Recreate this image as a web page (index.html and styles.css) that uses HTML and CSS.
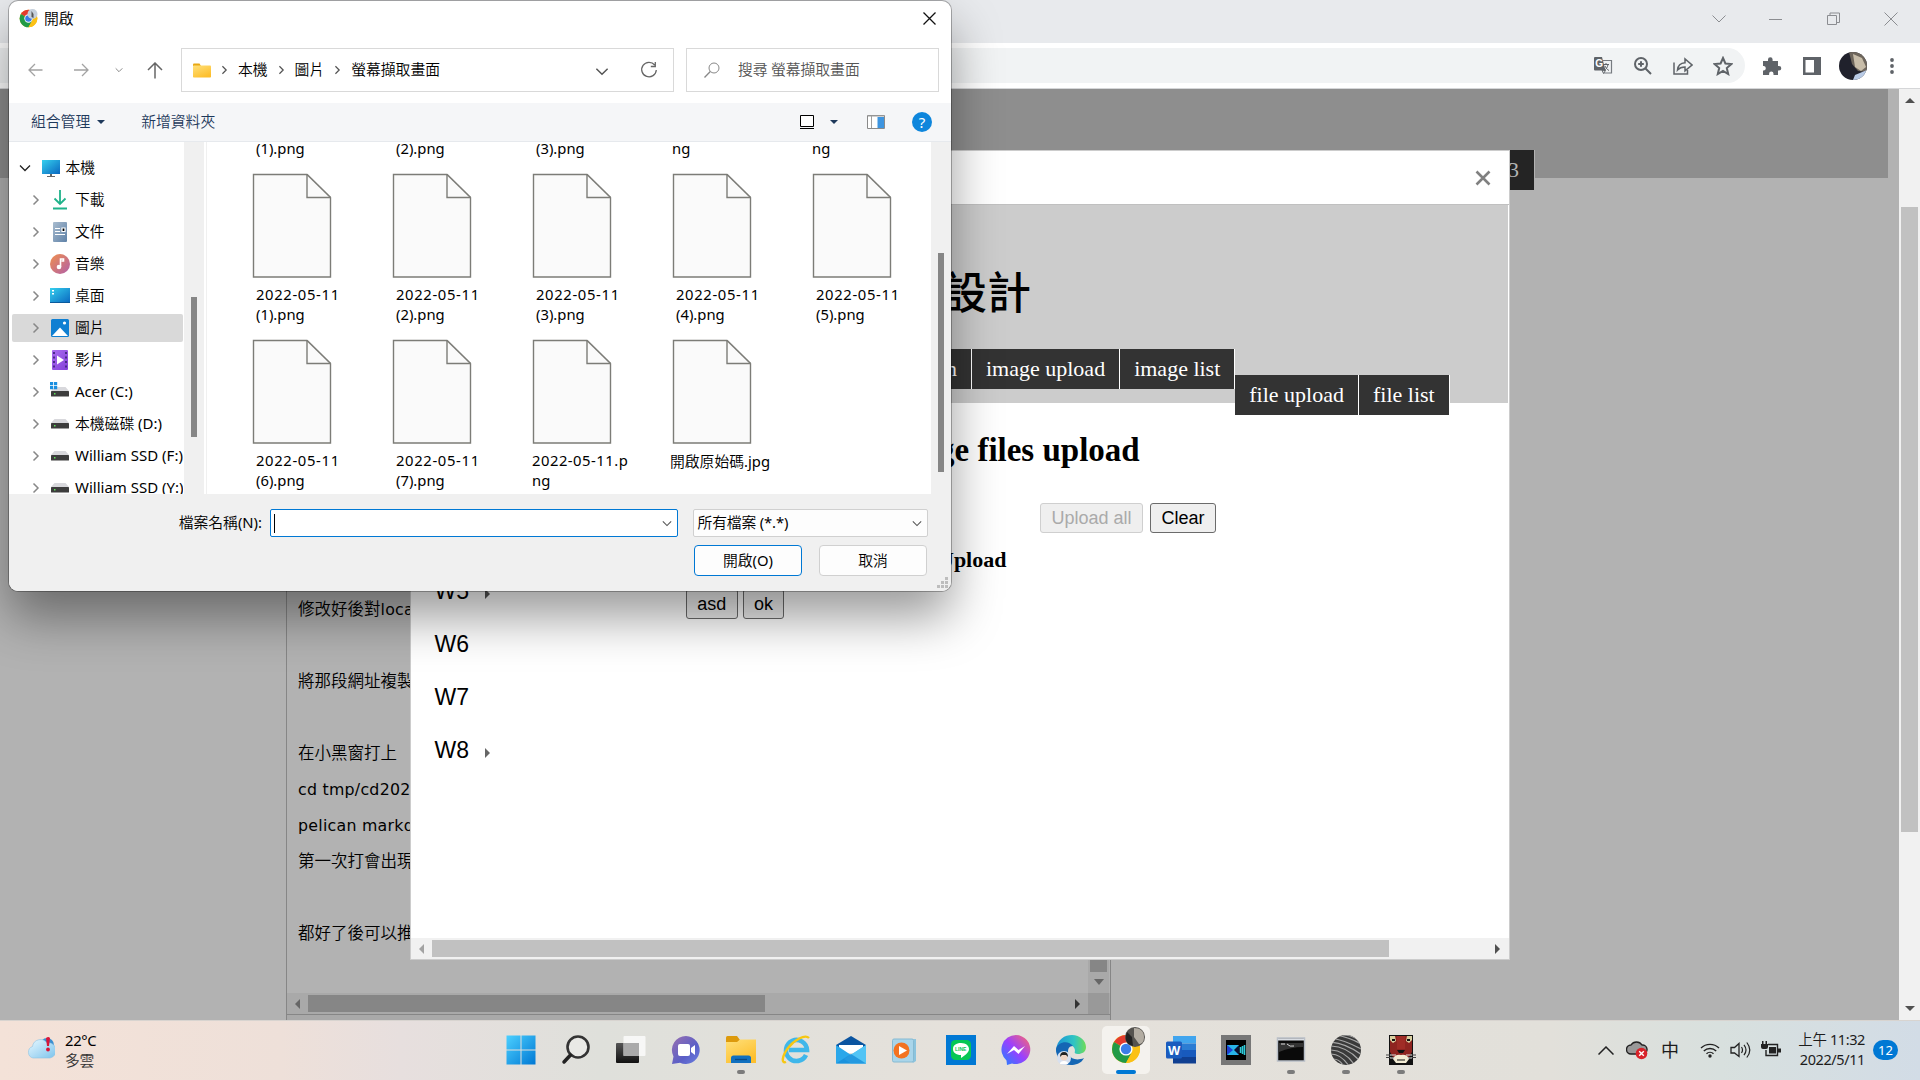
FILE: index.html
```html
<!DOCTYPE html>
<html lang="zh-Hant">
<head>
<meta charset="utf-8">
<title>開啟</title>
<link rel="stylesheet" href="styles.css">
</head>
<body>
<svg class="defs" width="0" height="0">
  <defs>
    <linearGradient id="gb" x1="0" y1="0" x2="1" y2="1"><stop offset="0" stop-color="#35d0ee"/><stop offset="1" stop-color="#0a67c0"/></linearGradient>
    <linearGradient id="gw" x1="0" y1="0" x2="1" y2="1"><stop offset="0" stop-color="#4cd0ff"/><stop offset="1" stop-color="#0078d4"/></linearGradient>
    <linearGradient id="gf" x1="0" y1="0" x2="0.6" y2="1"><stop offset="0" stop-color="#ffe07a"/><stop offset="1" stop-color="#fdbf2d"/></linearGradient>
    <linearGradient id="gm" x1="0" y1="0" x2="1" y2="1"><stop offset="0" stop-color="#f0904e"/><stop offset="1" stop-color="#b15fa8"/></linearGradient>
    <linearGradient id="gv" x1="0" y1="0" x2="1" y2="1"><stop offset="0" stop-color="#a96af0"/><stop offset="1" stop-color="#8442d8"/></linearGradient>
    <linearGradient id="gc" x1="0" y1="0" x2="1" y2="1"><stop offset="0" stop-color="#9a70b0"/><stop offset=".6" stop-color="#5b5fc7"/><stop offset="1" stop-color="#6a80e0"/></linearGradient>
    <linearGradient id="gd" x1="0" y1="0" x2="1" y2="1"><stop offset="0" stop-color="#a9bccf"/><stop offset="1" stop-color="#5f82a8"/></linearGradient>
    <linearGradient id="gcl" x1="0" y1="0" x2="1" y2="1"><stop offset="0" stop-color="#e8f8ff"/><stop offset="1" stop-color="#7cc3ec"/></linearGradient>
    <linearGradient id="gms" x1="0" y1="1" x2="1" y2="0"><stop offset="0" stop-color="#1a86ff"/><stop offset=".5" stop-color="#9a40ff"/><stop offset="1" stop-color="#ff6a68"/></linearGradient>
    <linearGradient id="ge" x1="0" y1="0" x2="1" y2="0"><stop offset="0" stop-color="#1a93d6"/><stop offset=".6" stop-color="#2fc4c4"/><stop offset="1" stop-color="#6fdc57"/></linearGradient>
    <linearGradient id="gt" x1="0" y1="0" x2="0" y2="1"><stop offset="0" stop-color="#555"/><stop offset="1" stop-color="#111"/></linearGradient>
    <symbol id="page" viewBox="0 0 80 106"><path d="M1.5 1.500H55L78.500 24.500V104H1.500z" fill="#fafafa" stroke="#7c7c77" stroke-width="1.400"/><path d="M55 1.500V24.500H78.500" fill="#fafafa" stroke="#7c7c77" stroke-width="1.400"/><path d="M55 1.500L78.500 24.500" stroke="#7c7c77" stroke-width="1.400"/></symbol>
    <symbol id="chr" viewBox="0 0 8 12"><path d="M1.500 1.500l4.500 4.500-4.500 4.500" fill="none" stroke="currentColor" stroke-width="1.500"/></symbol>
    <symbol id="chd" viewBox="0 0 12 8"><path d="M1 1.500l5 5 5-5" fill="none" stroke="currentColor" stroke-width="1.300"/></symbol>
    <symbol id="drive" viewBox="0 0 20 20"><path d="M4.500 5h11l3.500 4H1z" fill="#d8d8dc"/><rect x="1" y="9" width="18" height="5.500" rx=".6" fill="#3d3d3d"/><rect x="4" y="11" width="1.500" height="1.500" fill="#5fe05a"/></symbol>
    <symbol id="chrome" viewBox="0 0 30 30"><circle cx="15" cy="15" r="14" fill="#fbc116"/><path d="M15 15L2.900 8A14 14 0 0 1 27.100 8z" fill="#e33b2e"/><path d="M2.900 8A14 14 0 0 0 15 29l6-10.500L15 15z" fill="#219a47"/><path d="M15 8.500h12.400a14 14 0 0 1-12.400 20.500l5.600-10.500z" fill="#fbc116"/><circle cx="15" cy="15" r="6.600" fill="#fff"/><circle cx="15" cy="15" r="5.200" fill="#3a7de8"/></symbol>
  </defs>
</svg>

<div class="desktop">
  <section class="browser">
    <div class="tabstrip">
      <svg width="14" height="8"><path d="M.5 .5l6.500 6.500L13.500 .5" class="thin"/></svg>
      <svg width="14" height="14"><path d="M0 7.500h13" class="thin"/></svg>
      <svg width="14" height="14"><path d="M.5 3.500h9v9h-9zM3 3V1h9.500v9.500h-2.500" class="thin"/></svg>
      <svg width="14" height="14"><path d="M.5 .5l13 13M13.500 .5L.5 13.500" class="thin"/></svg>
    </div>
    <div class="toolbar">
      <div class="omnibox">
        <svg width="20" height="20" viewBox="0 0 20 20"><path d="M9 4.500h9.500v12.500H11" fill="#f1f3f4" stroke="#777b80" stroke-width="1.200"/><path d="M2 1h7l3.500 13.500H2a1 1 0 0 1-1-1V2a1 1 0 0 1 1-1z" fill="#5f6368"/><text x="2.300" y="11" class="gl">G</text><path d="M10 8.500h6M13 7v1.500M15 8.500c-.5 3-2 5-4 6M12 10c1 2 2 3.500 4 4.500M9 14l1.500 3.500 2-3z" fill="none" stroke="#5f6368"/></svg>
        <svg width="20" height="20" viewBox="0 0 20 20"><circle cx="8" cy="8" r="6" class="ic"/><path d="M12.500 12.500l5.500 5.500M5.200 8h5.600M8 5.200v5.600" class="ic"/></svg>
        <svg width="20" height="20" viewBox="0 0 20 20"><path d="M1 6.500V18h13.500v-4" fill="none" stroke="#5f6368" stroke-width="1.500"/><path d="M4.500 14c.5-5 3.500-7 7.500-7.200V3l7 6-7 5.800V11c-3.500 0-5.500.8-7.500 3z" fill="none" stroke="#5f6368" stroke-width="1.500"/></svg>
        <svg width="20" height="20" viewBox="0 0 20 20"><path d="M10 2l2.400 5.500 6 .5-4.600 4 1.400 6-5.200-3.200L4.800 18l1.400-6-4.600-4 6-.5z" class="ic"/></svg>
      </div>
      <div class="tools">
        <svg width="20" height="20" viewBox="0 0 20 20"><path d="M1 5h5V3.500a2.300 2.300 0 0 1 4.600 0V5h5.400v5h1a2.300 2.300 0 0 1 0 4.600h-1V19h-4.500v-1.200a2.200 2.200 0 0 0-4.400 0V19H1v-4.500h1a2.300 2.300 0 0 0 0-4.500H1z" fill="#5f6368"/></svg>
        <svg width="20" height="20" viewBox="0 0 20 20"><path d="M1 1h18v18H1zM3.500 4v12.500h8.500V4z" fill="#5f6368" fill-rule="evenodd"/></svg>
        <svg width="28" height="28" viewBox="0 0 28 28"><clipPath id="av"><circle cx="14" cy="14" r="14"/></clipPath><g clip-path="url(#av)"><path d="M0 0h28v28H0z" fill="#20212c"/><path d="M10 0h18v20l-9-1-6-7z" fill="#6e665c"/><path d="M14 2l9 4 4 9-5 4-6-4z" fill="#c8bda9"/><path d="M16 23l12-5v10H14z" fill="#b9cbe6"/></g></svg>
        <svg width="6" height="18" viewBox="0 0 6 18"><circle cx="3" cy="3" r="1.900" fill="#5f6368"/><circle cx="3" cy="9" r="1.900" fill="#5f6368"/><circle cx="3" cy="15" r="1.900" fill="#5f6368"/></svg>
      </div>
    </div>
    <div class="viewport">
      <div class="page">
        <div class="banner"></div>
        <div class="counter">3</div>
        <div class="article">
          <div class="article-row">
            <div class="text">
              <p>修改好後對<span>localhost</span></p><p></p><p>將那段網址複製起來</p><p></p><p>在小黑窗打上</p>
              <p><span>cd tmp/cd2022</span></p><p><span>pelican markdown</span></p><p>第一次打會出現</p><p></p><p>都好了後可以推</p>
            </div>
            <div class="vbar"><i></i><svg width="10" height="6"><path d="M0 0h10L5 6z" fill="#666"/></svg></div>
          </div>
          <div class="hbar"><svg width="5" height="10"><path d="M5 0v10L0 5z" fill="#666"/></svg><i></i><svg width="5" height="10"><path d="M0 0v10l5-5z" fill="#333"/></svg><b></b></div>
          <div class="status"></div>
        </div>
      </div>
      <div class="scroll">
        <svg width="10" height="5"><path d="M0 5h10L5 0z" fill="#505050"/></svg><i></i><svg width="10" height="5"><path d="M0 0h10L5 5z" fill="#505050"/></svg>
      </div>
    </div>
  </section>

  <section class="modal">
    <header><svg width="16" height="16"><path d="M1.500 1.500l13 13M14.500 1.500l-13 13" stroke="#808080" stroke-width="2.600"/></svg></header>
    <div class="hero">
      <h1>設計</h1>
      <nav><a>n</a><a>image upload</a><a>image list</a><span><a>file upload</a><a>file list</a></span></nav>
    </div>
    <div class="columns">
      <ul>
        <li>W5<svg width="5" height="10"><path d="M0 0v10l5-5z" fill="#555"/></svg></li><li>W6</li><li>W7</li>
        <li>W8<svg width="5" height="10"><path d="M0 0v10l5-5z" fill="#666"/></svg></li>
      </ul>
      <div class="form">
        <h2>ge files upload</h2>
        <div class="actions"><button disabled>Upload all</button><button>Clear</button></div>
        <h3>Upload</h3>
        <div class="pair"><button>asd</button><button>ok</button></div>
      </div>
    </div>
    <footer><svg width="5" height="10"><path d="M5 0v10L0 5z" fill="#a3a3a3"/></svg><i></i><svg width="5" height="10"><path d="M0 0v10l5-5z" fill="#505050"/></svg></footer>
  </section>

  <section class="dialog">
    <div class="titlebar">
      <svg width="19" height="19"><use href="#chrome"/><circle cx="13.500" cy="5" r="5" fill="#c5cfdb"/><path d="M12.500 2l2 3v4l-2-1z" fill="#555"/></svg>
      <span class="cjk">開啟</span>
      <svg class="x" width="13" height="13"><path d="M.5 .5l12 12M12.500 .5l-12 12" stroke="#111" stroke-width="1.300"/></svg>
    </div>
    <div class="nav">
      <div class="arrows">
        <svg width="15" height="14"><path d="M14.500 7H1M7 1L1 7l6 6" fill="none" stroke="#a3a3a3" stroke-width="1.300"/></svg>
        <svg width="15" height="14"><path d="M0 7h13.500M8 1l6 6-6 6" fill="none" stroke="#a3a3a3" stroke-width="1.300"/></svg>
        <svg width="8" height="6" class="g9"><use href="#chd"/></svg>
        <svg width="16" height="17"><path d="M8 16.500V1M1 8l7-7 7 7" fill="none" stroke="#666" stroke-width="1.500"/></svg>
      </div>
      <div class="path cjk">
        <svg width="18" height="15"><path d="M0 1.500Q0 .5 1 .5h5.500L8 3H0z" fill="#e8a712"/><rect y="2.500" width="18" height="12" rx=".8" fill="url(#gf)"/></svg>
        <svg width="7" height="10"><use href="#chr"/></svg><span>本機</span>
        <svg width="7" height="10"><use href="#chr"/></svg><span>圖片</span>
        <svg width="7" height="10"><use href="#chr"/></svg><span>螢幕擷取畫面</span>
        <svg class="drop" width="14" height="9"><use href="#chd"/></svg>
        <svg width="18" height="18"><path d="M14.700 4A7.300 7.300 0 1 0 16.300 9M15.300 1v4.500h-4.500" fill="none" stroke="#666" stroke-width="1.300"/></svg>
      </div>
      <div class="search cjk"><svg width="16" height="16"><circle cx="10" cy="6" r="5" fill="none" stroke="#888"/><path d="M6.300 9.500L.5 15.500" stroke="#888" stroke-width="1.300"/></svg><span>搜尋 螢幕擷取畫面</span></div>
    </div>
    <div class="commands cjk">
      <span>組合管理</span><svg width="8" height="4"><path d="M0 0h8L4 4z" fill="#1e395b"/></svg><span class="new">新增資料夾</span>
      <svg class="view" width="16" height="16"><path d="M1.500 1.500h13v11h-13z" fill="#fff" stroke="#000"/><path d="M1 14.500h14" stroke="#000"/></svg>
      <svg class="tri" width="8" height="4"><path d="M0 0h8L4 4z" fill="#1e395b"/></svg>
      <svg class="pane" width="18" height="14"><path d="M.5 .5h17v13H.5z" fill="#fff" stroke="#8a8a8a"/><path d="M1 1h16M4.500 1v12" stroke="#a0a0a0"/><path d="M10.500 2h6.500v11h-6.500z" fill="#3e95e0"/></svg>
      <div class="help">?</div>
    </div>
    <div class="content">
      <div class="tree">
        <div class="row root"><svg width="12" height="8"><use href="#chd"/></svg><svg width="20" height="20"><path d="M1 2h18v14H1z" fill="url(#gb)"/><path d="M9 16h2v2h3v1H6v-1h3z" fill="#666"/></svg><span class="cjk">本機</span></div>
        <div class="row"><svg width="8" height="12"><use href="#chr"/></svg><svg width="20" height="20"><path d="M10 0v14M4.500 8.500L10 14l5.500-5.500M3 18.500h14" fill="none" stroke="#1fb28a" stroke-width="1.800"/></svg><span class="cjk">下載</span></div>
        <div class="row"><svg width="8" height="12"><use href="#chr"/></svg><svg width="20" height="20"><rect x="3" width="14" height="20" rx="1" fill="url(#gd)"/><path d="M5 6.500h5M5 9.500h5M5 12.500h10M12 6h3v3.500h-3z" stroke="#fff" stroke-width="1.200"/></svg><span class="cjk">文件</span></div>
        <div class="row"><svg width="8" height="12"><use href="#chr"/></svg><svg width="20" height="20"><circle cx="10" cy="10" r="10" fill="url(#gm)"/><path d="M10.500 13V5h3v2h-2" fill="none" stroke="#fff" stroke-width="1.600"/><circle cx="9" cy="13" r="2.300" fill="#fff"/></svg><span class="cjk">音樂</span></div>
        <div class="row"><svg width="8" height="12"><use href="#chr"/></svg><svg width="20" height="20"><path d="M0 2h20v15H0z" fill="url(#gb)"/><path d="M2 4h2v1.500H2zM2 7h2v1.500H2z" fill="#fff"/><path d="M0 16h20v1H0z" fill="#0a5a9c"/></svg><span class="cjk">桌面</span></div>
        <div class="row sel"><svg width="8" height="12"><use href="#chr"/></svg><svg width="20" height="20"><rect x="1" y="1" width="18" height="18" rx="1.500" fill="#0f7fd2"/><path d="M2 18l8-8.500 8 8.500z" fill="#fff"/><circle cx="14.500" cy="5" r="1.600" fill="#fff"/></svg><span class="cjk">圖片</span></div>
        <div class="row"><svg width="8" height="12"><use href="#chr"/></svg><svg width="20" height="20"><rect x="2" width="16" height="20" rx="1" fill="url(#gv)"/><path d="M4 2v17M16 2v17" stroke="#4b2a8a" stroke-width="2" stroke-dasharray="2 2.500"/><path d="M7 5.500l7 4.500-7 4.500z" fill="#fff"/></svg><span class="cjk">影片</span></div>
        <div class="row"><svg width="8" height="12"><use href="#chr"/></svg><svg width="20" height="20"><use href="#drive"/><path d="M0 0h3.200v3.200H0zM4 0h3.200v3.200H4zM0 4h3.200v3.200H0zM4 4h3.200v3.200H4z" fill="#1a8fe0"/></svg><span>Acer (C:)</span></div>
        <div class="row"><svg width="8" height="12"><use href="#chr"/></svg><svg width="20" height="20"><use href="#drive"/></svg><span><u class="cjk">本機磁碟</u> (D:)</span></div>
        <div class="row"><svg width="8" height="12"><use href="#chr"/></svg><svg width="20" height="20"><use href="#drive"/></svg><span>William SSD (F:)</span></div>
        <div class="row"><svg width="8" height="12"><use href="#chr"/></svg><svg width="20" height="20"><use href="#drive"/></svg><span>William SSD (Y:)</span></div>
      </div>
      <div class="track left"><i></i></div>
      <div class="files">
        <div class="line"><span>(1).png</span><span>(2).png</span><span>(3).png</span><span class="w">ng</span><span class="w">ng</span></div>
        <div class="grid">
          <div><svg width="80" height="106"><use href="#page"/></svg><p><b>2022-05-11</b>(1).png</p></div>
          <div><svg width="80" height="106"><use href="#page"/></svg><p><b>2022-05-11</b>(2).png</p></div>
          <div><svg width="80" height="106"><use href="#page"/></svg><p><b>2022-05-11</b>(3).png</p></div>
          <div><svg width="80" height="106"><use href="#page"/></svg><p><b>2022-05-11</b>(4).png</p></div>
          <div><svg width="80" height="106"><use href="#page"/></svg><p><b>2022-05-11</b>(5).png</p></div>
          <div><svg width="80" height="106"><use href="#page"/></svg><p><b>2022-05-11</b>(6).png</p></div>
          <div><svg width="80" height="106"><use href="#page"/></svg><p><b>2022-05-11</b>(7).png</p></div>
          <div><svg width="80" height="106"><use href="#page"/></svg><p class="w"><b>2022-05-11.p</b>ng</p></div>
          <div><svg width="80" height="106"><use href="#page"/></svg><p class="z"><u class="cjk">開啟原始碼</u>.jpg</p></div>
        </div>
      </div>
      <div class="track right"><i></i></div>
    </div>
    <div class="bottom">
      <div class="fields">
        <label><u class="cjk">檔案名稱</u>(N):</label>
        <div class="input"><i></i><svg width="10" height="7"><use href="#chd"/></svg></div>
        <div class="select"><span><u class="cjk">所有檔案</u> (*.*)</span><svg width="10" height="7"><use href="#chd"/></svg></div>
      </div>
      <div class="buttons"><div class="btn primary"><u class="cjk">開啟</u>(O)</div><div class="btn cjk">取消</div></div>
      <svg class="grip" width="12" height="12"><path d="M8 0h3v3H8zM8 4h3v3H8zM4 4h3v3H4zM8 8h3v3H8zM4 8h3v3H4zM0 8h3v3H0z" fill="#bdbdbd"/></svg>
    </div>
  </section>

  <section class="taskbar">
    <div class="weather">
      <svg width="28" height="24" viewBox="0 0 28 24"><circle cx="20" cy="9" r="7" fill="#3b8fd0"/><path d="M6 22a6 6 0 0 1-.5-11.500A8 8 0 0 1 20 7a6 6 0 0 1 3 15z" fill="url(#gcl)" stroke="#8fc2e2" stroke-width=".6"/><path d="M19 2q2.500-2 4 0l-1 8h-2z" fill="#d9153a"/><circle cx="21" cy="13.500" r="1.900" fill="#d9153a"/></svg>
      <div>22°C<br><em class="cjk">多雲</em></div>
    </div>
    <div class="apps">
      <div><svg width="30" height="30"><path d="M.5 .5h14v14H.5zM15.500 .5h14v14h-14zM.5 15.500h14v14H.5zM15.500 15.500h14v14h-14z" fill="url(#gw)"/></svg></div>
      <div><svg width="30" height="30"><circle cx="17" cy="12" r="10.500" fill="#e9e9e6" stroke="#333" stroke-width="2.600"/><path d="M9.500 20L3 27" stroke="#222" stroke-width="3.500" stroke-linecap="round"/></svg></div>
      <div><svg width="30" height="30"><rect y="8" width="23" height="20" rx="1" fill="url(#gt)"/><rect x="7.500" y="1" width="22" height="20" rx="1" fill="#fff" opacity=".75"/><path d="M7.500 8H23v13H7.500z" fill="#aaa"/></svg></div>
      <div><svg width="30" height="30"><path d="M15 1a14 14 0 1 1-6 26.800L1 29l1.500-7.500A14 14 0 0 1 15 1z" fill="url(#gc)"/><rect x="7" y="9" width="12" height="12" rx="2" fill="#fff"/><path d="M20 13l4-3v10l-4-3z" fill="#fff"/></svg></div>
      <div class="run"><svg width="30" height="30"><path d="M0 2.500Q0 1 1.500 1H11l3 4-3 3H0z" fill="#dd9a0c"/><path d="M0 7h11l3-2.500h16V28H0z" fill="url(#gf)"/><path d="M5 28v-5q0-2.500 2.500-2.500h15q2.500 0 2.500 2.500v5z" fill="#1170bf"/><path d="M9 24.500h12" stroke="#0a4a86" stroke-width="1.300"/></svg></div>
      <div><svg width="30" height="30"><path d="M25 20A10.500 10.500 0 1 1 26 15H8" fill="none" stroke="#3fb7ea" stroke-width="4.600"/><path d="M28 3C24-1 13 5 7 13S0 29 5 27" fill="none" stroke="#f6c713" stroke-width="2.400"/></svg></div>
      <div><svg width="30" height="30"><path d="M0 10L15 1l15 9v6H0z" fill="#0a54a0"/><path d="M3 10h24v8H3z" fill="#fff"/><path d="M0 10l15 10L30 10v18.500H0z" fill="#2aa7ea"/><path d="M30 10L8 24l7 4.500h15z" fill="#52c4f5"/><path d="M0 28.500h30L15 19z" fill="#168bd8" opacity=".75"/></svg></div>
      <div><svg width="30" height="30"><path d="M5 5l20-1v22l-3 2z" fill="#8cc4de"/><rect x="1.500" y="4" width="21" height="23" rx="1.500" fill="#a9d5ea" stroke="#86bad2"/><circle cx="10.500" cy="15.500" r="8" fill="#f37321"/><path d="M8 11l8 4.500-8 4.500z" fill="#fff"/></svg></div>
      <div><svg width="30" height="30"><path d="M0 0h30v30H0z" fill="#0078d4"/><rect x="5" y="5" width="20" height="20" rx="4.500" fill="#06c755"/><path d="M15 8c5 0 8 2.800 8 6 0 4-5 7-8 9v-3c-5 0-8-2.500-8-6s3-6 8-6z" fill="#fff"/><text x="9" y="16.300" class="ln">LINE</text></svg></div>
      <div><svg width="30" height="30"><path d="M15 0a14.500 14.500 0 1 1-4 28.500L6 30l-.5-4.500A14.500 14.500 0 0 1 15 0z" fill="url(#gms)"/><path d="M6 19l7-8 4.500 4 6.500-4-6.500 8-4.500-4z" fill="#fff"/></svg></div>
      <div><svg width="30" height="30"><path d="M0 15C1 4 9 0 16 0c8 0 14 6 14 12 0 5-4 7-8 7-3 0-4-1-3-3 0-5-5-7-9-6S2 13 0 18z" fill="url(#ge)"/><path d="M0 14c2-8 13-9 17-3-5 0-6 5-4 9s8 6 15 3c-3 6-9 7-13 7C6 30 0 23 0 14z" fill="#1466b4"/><circle cx="8" cy="23" r="7" fill="#d7e0ef"/><circle cx="8" cy="22" r="3.500" fill="#f1d5c4"/><path d="M4 22q0-5 4-5t4 5l-2-2H6z" fill="#222"/><path d="M4 29q0-3 4-3t4 3z" fill="#fff"/></svg></div>
      <div class="run active"><svg width="38" height="38"><use href="#chrome" x="4" y="7" width="30" height="30"/><circle cx="28" cy="10" r="10" fill="#55534f"/><path d="M27 1c6 0 10 3 10 9s-3 7-5 7l-5-7z" fill="#b3ada3"/><path d="M20 5q-3 7 1 12l5 2-1-9z" fill="#222"/></svg></div>
      <div><svg width="30" height="30"><path d="M7 1h23v7.500H7z" fill="#41a5ee"/><path d="M7 8.500h23V15H7z" fill="#2b7cd3"/><path d="M7 15h23v7H7z" fill="#185abd"/><path d="M7 22h23v6.500H7z" fill="#103f91"/><rect y="6.500" width="16" height="17" rx="1.500" fill="#1b5cbe"/><text x="2" y="19.500" class="wd">W</text></svg></div>
      <div><svg width="30" height="30"><path d="M0 0h30v30H0z" fill="#777"/><path d="M5 5h20v20H5z" fill="#000"/><path d="M6 10h12v10H6z" fill="#28b4e8"/><path d="M6 10l6 5-6 5z" fill="#1c3fd0"/><path d="M18 10l-5 5 5 5z" fill="#0b1030"/><path d="M19.500 12v6M21.500 11v8M23.500 10v10" stroke="#2fc9d8" stroke-width="1.600"/></svg></div>
      <div class="run"><svg width="30" height="30"><rect x="1.500" y="3" width="27" height="23" fill="#0a0a0a" stroke="#b9bfc8" stroke-width="1.500"/><path d="M2 4.500h26" stroke="#d9dde3" stroke-width="2"/><path d="M3 8h24v4q-12 0-24 5z" fill="#333"/><path d="M5 9h4M11 9l3 2h4" stroke="#ddd"/></svg></div>
      <div class="run"><svg width="30" height="30"><clipPath id="bl"><circle cx="15" cy="15" r="15"/></clipPath><g clip-path="url(#bl)"><path d="M0 0h30v30H0z" fill="#3a3a3a"/><path d="M0 3q14 2 32 12M4 0q14 2 26 9M-1 7q16 1 32 13M-1 11q16 0 29 14M-1 15q14 0 24 14M0 19q10 0 18 12M2 24q6 0 10 6M12 0q8 0 14 4" fill="none" stroke="#a8a8a8" stroke-width="1.200"/></g></svg></div>
      <div class="run"><svg width="30" height="30"><path d="M3 0h24v30H3z" fill="#111"/><path d="M4 1h22v16l-3 5H7l-3-5z" fill="#8e2420"/><path d="M11 1h8v13h-8z" fill="#a02c26"/><path d="M4 1h5l1 5-3 2-3-3zM26 1h-5l-1 5 3 2 3-3z" fill="#d9cfa0"/><path d="M6 4h3v2H6zM21 4h3v2h-3z" fill="#111"/><path d="M11 15h8l-2 3h-4z" fill="#111"/><path d="M7 24q2-5 8-4 6-1 8 4l-3 4H10z" fill="#f3ecd4"/><path d="M11 25h8" stroke="#111"/><path d="M0 20h5M25 20h5M0 22.500h5M25 22.500h5" stroke="#444"/><path d="M4 20h6M20 20h6M4 23h5M21 23h5" stroke="#ddd"/></svg></div>
    </div>
    <div class="tray">
      <svg width="16" height="9"><path d="M.5 8.500L8 1l7.500 7.500" fill="none" stroke="#222" stroke-width="1.500"/></svg>
      <svg class="cloud" width="22" height="20"><path d="M5 14a4.500 4.500 0 0 1 0-9 6.500 6.500 0 0 1 11 0 4.500 4.500 0 0 1 1 9z" fill="#999" stroke="#222" stroke-width="1.400"/><circle cx="15.500" cy="13.500" r="5.800" fill="#d8232a"/><path d="M13.200 11.200l4.600 4.600M17.800 11.200l-4.600 4.600" stroke="#fff" stroke-width="1.400"/></svg>
      <span class="ime">中</span>
      <svg class="wifi" width="20" height="16"><path d="M1 6a13 13 0 0 1 18 0M3.800 9a9 9 0 0 1 12.400 0M6.500 11.800a5 5 0 0 1 7 0" fill="none" stroke="#222" stroke-width="1.400"/><circle cx="10" cy="14" r="1.700" fill="#222"/></svg>
      <svg class="vol" width="21" height="18"><path d="M1 6.500h3.500L9 2.500v13L4.500 12H1z" fill="none" stroke="#222" stroke-width="1.300"/><path d="M11.500 6q2 3 0 6M14 3.800q4 5.200 0 10.400M16.800 1.500q6 7.500 0 15" fill="none" stroke="#222" stroke-width="1.200"/></svg>
      <svg class="bat" width="21" height="18"><path d="M7 3.500h9.500v11H5V9" fill="none" stroke="#222" stroke-width="1.400"/><path d="M8 6h7v6.500H8zM17 7.500h3v4h-3zM0 3h7v3q0 2-2 2H2q-2 0-2-2zM1 0h1.500v3H1zM4.500 0H6v3H4.500z" fill="#222"/></svg>
      <div class="clock"><u class="cjk">上午</u> 11:32<br>2022/5/11</div>
      <div class="badge">12</div>
    </div>
  </section>
</div>
</body>
</html>
```
FILE: styles.css
```css
* { box-sizing: border-box; }
body, p, h1, h2, h3, ul { margin: 0; padding: 0; }
body { overflow: hidden; font: 14.8px "Noto Sans", "Noto Sans CJK TC", sans-serif; color: #000; }
svg { display: block; flex: none; }
u { text-decoration: none; }
.cjk { font-family: "Noto Sans CJK TC", sans-serif; font-weight: 350; }
.defs { position: absolute; }
.desktop { position: relative; width: 1920px; height: 1080px; overflow: hidden; }
.thin { fill: none; stroke: #8b8d91; }
.ic { fill: none; stroke: #5f6368; stroke-width: 2; }
.gl { font: bold 10px "Liberation Sans", sans-serif; fill: #fff; }
.ln { font: bold 5px "Liberation Sans", sans-serif; fill: #06c755; }
.wd { font: bold 13px "Liberation Sans", sans-serif; fill: #fff; }

/* browser */
.browser { height: 1020px; display: flex; flex-direction: column; }
.tabstrip { height: 43px; background: #e8eaed; display: flex; justify-content: flex-end; align-items: center; gap: 43.5px; padding: 0 22px 6px 0; }
.toolbar { height: 46px; background: #fff; border-bottom: 1px solid #d5d6d8; display: flex; align-items: center; padding-right: 25px; }
.omnibox { flex: 1; height: 35px; background: #f1f3f4; border-radius: 0 18px 18px 0; display: flex; justify-content: flex-end; align-items: center; gap: 20px; padding-right: 12.500px; }
.tools { width: 150px; display: flex; align-items: center; justify-content: flex-end; gap: 20px; }
.tools svg:nth-child(3) { margin-left: -3px; }
.tools svg:nth-child(4) { margin-left: 2px; }
.viewport { flex: 1; display: flex; }
.page { position: relative; flex: 1; background: #b2b2b2; }
.banner { width: 1888px; height: 89px; background: #8e8e8e; }
.counter { position: absolute; left: 1490px; top: 61px; width: 45px; height: 40px; background: #242424; border-right: 1px solid #b2b2b2; color: #b2b2b2; font: 22px/40px "Liberation Serif", serif; text-align: right; padding-right: 15px; }
.article { margin-left: 286px; width: 825px; height: 842px; border: 1px solid #868686; border-width: 0 1px; display: flex; flex-direction: column; }
.article-row { height: 815px; display: flex; padding-right: 1px; }
.text { flex: 1; padding: 412px 0 0 11px; font: 300 16.500px/36px "Noto Sans CJK TC", sans-serif; font-weight: 350; white-space: nowrap; }
.text p { height: 36px; overflow: hidden; }
.text span { font: 400 15.800px/34px "DejaVu Sans", sans-serif; letter-spacing: .25px; }
.vbar { width: 21px; background: #a9a9a9; display: flex; flex-direction: column; align-items: center; }
.vbar i { width: 17px; height: 794px; background: #868686; margin-bottom: 7px; }
.hbar { height: 21px; background: #a9a9a9; display: flex; align-items: center; padding: 0 1px 0 8px; }
.hbar i { width: 457px; height: 17px; background: #868686; margin: 0 310px 0 8px; }
.hbar b { margin-left: auto; width: 21px; height: 21px; background: #999; }
.status { height: 6px; background: #a9a9a9; border-top: 1px solid #868686; }
.scroll { width: 21px; background: #f1f1f1; display: flex; flex-direction: column; align-items: center; padding: 9px 0; }
.scroll i { width: 17px; height: 625px; background: #c1c1c1; margin: 104px 0 auto; }

/* modal window */
.modal { position: absolute; left: 410px; top: 150px; width: 1100px; height: 810px; background: #fff; border: 1px solid #ccc; display: flex; flex-direction: column; }
.modal header { height: 54px; border-bottom: 1px solid #c0c0c0; display: flex; justify-content: flex-end; align-items: center; padding-right: 18.500px; }
.hero { height: 198px; margin-right: 1px; background: #ccc; padding-top: 60px; }
.hero h1 { font: 500 44px/50px "Noto Sans CJK TC", sans-serif; margin: 0 0 34px 532px; }
.hero nav, .hero span { display: flex; }
.hero nav { padding-left: 521px; font: 22px/40px "Liberation Serif", serif; color: #fff; }
.hero a { height: 40px; background: #333; border-right: 1px solid #fff; padding: 0 14px; white-space: nowrap; }
.hero span { margin-top: 26px; }
.columns { flex: 1; display: flex; }
.columns ul { width: 275px; padding: 162px 0 0 23.500px; list-style: none; font: 23px/53px "Liberation Sans", sans-serif; }
.columns li { display: flex; align-items: center; height: 53px; gap: 16px; }
.columns li svg { margin-top: 5px; }
.form { font-family: "Liberation Serif", serif; }
.form h2 { font-size: 33px; line-height: 38px; margin: 28px 0 0 252px; }
.form h3 { font-size: 22px; line-height: 26px; margin: 14px 0 16px 252px; }
.actions, .pair { display: flex; gap: 7px; }
.pair { gap: 5px; }
.actions { margin: 34px 0 0 354px; }
button { height: 30px; padding: 0 10.500px; font: 18px "Liberation Sans", sans-serif; color: #000; background: #efefef; border: 1px solid #6b6b6b; border-radius: 3px; }
.pair button { padding: 0 10.300px; }
button:disabled { color: #aaa; border-color: #cfcfcf; }
.modal footer { height: 21px; background: #f1f1f1; display: flex; align-items: center; padding: 0 9px 0 8px; }
.modal footer i { width: 957px; height: 17px; background: #c1c1c1; margin: 0 auto 0 8px; }

/* file dialog */
.dialog { position: absolute; left: 9px; top: 1px; width: 942px; height: 590px; background: #fff; border-radius: 9px; overflow: hidden; box-shadow: 0 0 0 1px rgba(0,0,0,.28), 0 26px 50px rgba(0,0,0,.4); display: flex; flex-direction: column; }
.titlebar { height: 47px; display: flex; padding: 8px 15px 0 10px; gap: 6px; line-height: 18px; }
.titlebar .x { margin: 3px 0 0 auto; }
.nav { height: 44px; display: flex; }
.arrows { width: 172px; display: flex; align-items: center; padding-left: 18.500px; }
.arrows svg:nth-child(2) { margin-left: 31px; }
.arrows svg:nth-child(3) { margin: 0 24px 0 26px; }
.g9 { color: #777; }
.path { width: 493px; border: 1px solid #d9d9d9; display: flex; align-items: center; padding: 0 15px 0 11px; color: #555; white-space: nowrap; }
.path span { color: #000; margin: 0 10px 3px; }
.path > svg:nth-child(2) { margin-left: 10px; }
.path .drop { margin: 2px 31px 0 auto; }
.search { width: 253px; margin-left: 12px; border: 1px solid #d9d9d9; display: flex; align-items: center; padding-left: 17px; gap: 18px; color: #555; }
.search span { margin-bottom: 3px; }
.commands { height: 39px; margin-top: 11px; background: #f5f6f8; border-bottom: 1px solid #e6e9ed; display: flex; align-items: center; padding-left: 22px; color: #1e395b; }
.commands span { margin-top: -3px; }
.commands svg { margin-left: 7px; }
.commands .new { margin-left: 36px; }
.commands .view { margin-left: auto; }
.commands .tri { margin-left: 15px; }
.commands .pane { margin-left: 29px; }
.help { width: 20px; height: 20px; margin: 0 19px 0 27px; border-radius: 50%; background: #0e86dc; color: #fff; font: 15px/20px "Noto Sans", sans-serif; text-align: center; }
.content { height: 352px; display: flex; overflow: hidden; }
.tree { width: 175px; padding: 10px 1px 0 3px; }
.row { height: 32px; display: flex; align-items: center; padding-left: 20px; color: #888; white-space: nowrap; overflow: hidden; }
.row > svg + svg { margin-left: 10px; }
.row span { color: #000; margin: -3px 0 0 5px; font-size: 15px; }
.row .cjk { font-size: 14.800px; }
.row.root { padding-left: 6.500px; color: #222; }
.row.sel { background: #d9d9d9; height: 28px; margin: 2px 0; border-radius: 2px; }
.track { width: 20px; background: #f0f0f0; }
.track i { display: block; width: 6px; background: #868686; margin-left: 7px; }
.left i { height: 140px; margin-top: 155px; }
.right i { height: 219px; margin-top: 111px; }
.files { flex: 1; margin-left: 2px; border-left: 1px solid #f0f0f0; padding-left: 45px; overflow: hidden; }
.line { height: 31px; display: flex; line-height: 20px; margin-right: -40px; }
.line span { flex: none; width: 140px; padding-left: 4px; margin-top: -4px; }
.line .w { padding-left: 0; }
.grid { display: grid; grid-template-columns: repeat(5, 140px); grid-auto-rows: 166px; margin-right: -40px; }
.grid p { line-height: 19.500px; margin-top: 6px; padding-left: 4px; }
.grid b { display: block; font-weight: 400; letter-spacing: .65px; }
.grid .w { padding-left: 0; }
.grid .w b { letter-spacing: .5px; }
.grid .z { margin-left: -2px; padding-left: 0; }
.bottom { position: relative; flex: 1; background: #f0f0f0; padding-top: 15px; }
.fields { display: flex; height: 28px; align-items: center; }
.fields label { width: 261px; padding-right: 8px; margin-top: -4px; text-align: right; }
.input { width: 408px; height: 28px; background: #fff; border: 1px solid #0078d4; border-radius: 2px; display: flex; align-items: center; justify-content: space-between; padding: 0 5px 0 3px; color: #555; }
.input i { width: 1px; height: 19px; background: #000; }
.select { width: 235px; height: 28px; margin-left: 15px; background: #fdfdfd; border: 1px solid #d0d0d0; border-radius: 2px; display: flex; align-items: center; justify-content: space-between; padding: 0 5px 0 3.500px; color: #555; }
.select span { color: #000; margin-top: -4px; letter-spacing: -.15px; }
.buttons { display: flex; gap: 17px; margin: 8px 0 0 685px; }
.btn { width: 108px; height: 31px; border: 1px solid #d0d0d0; border-radius: 4px; background: #fdfdfd; text-align: center; line-height: 27px; }
.btn.primary { border-color: #0078d4; }
.grip { position: absolute; right: 2px; bottom: 2px; }

/* taskbar */
.taskbar { position: absolute; left: 0; top: 1020px; width: 1920px; height: 60px; display: flex; align-items: center; background: linear-gradient(90deg, #f4e2d8 0, #eee0d9 280px, #e7dfde 400px, #dfe0db 600px, #e5e1db 950px, #e2e0da 1550px, #d8e0de 1720px, #d2dce6 1920px); border-top: 1px solid #d8d4d0; padding-bottom: 1px; }
.weather { width: 493px; display: flex; align-items: center; gap: 10px; padding-left: 27px; line-height: 20px; letter-spacing: -.3px; }
.weather svg { margin-top: -4px; }
.weather em { font-style: normal; color: #333; }
.apps { display: flex; }
.apps > div { width: 55px; height: 48px; display: flex; align-items: center; justify-content: center; position: relative; }
.run::after { content: ""; position: absolute; left: 23.500px; bottom: 0; width: 8px; height: 4px; border-radius: 2px; background: #7b7b7b; }
.apps .active { background: #f4f2ee; border-radius: 5px; width: 48px; margin: 0 3px 0 4px; }
.active svg { margin-top: -8px; }
.active::after { left: 14px; bottom: 0; width: 20px; background: #0078d4; }
.tray { margin-left: auto; display: flex; align-items: center; padding-right: 22px; color: #1c1c1c; }
.cloud { margin-left: 12px; }
.ime { font-size: 18px; margin: -3px 0 0 13px; width: 18px; }
.wifi { margin-left: 21px; }
.vol { margin-left: 10px; }
.bat { margin-left: 10px; }
.clock { width: 83px; text-align: right; line-height: 20px; font-size: 14.500px; letter-spacing: -.4px; white-space: nowrap; margin-top: -3px; }
.badge { width: 25px; height: 20px; border-radius: 10px; margin-left: 8px; background: #0078d4; color: #fff; font-size: 13px; line-height: 20px; text-align: center; }
```
